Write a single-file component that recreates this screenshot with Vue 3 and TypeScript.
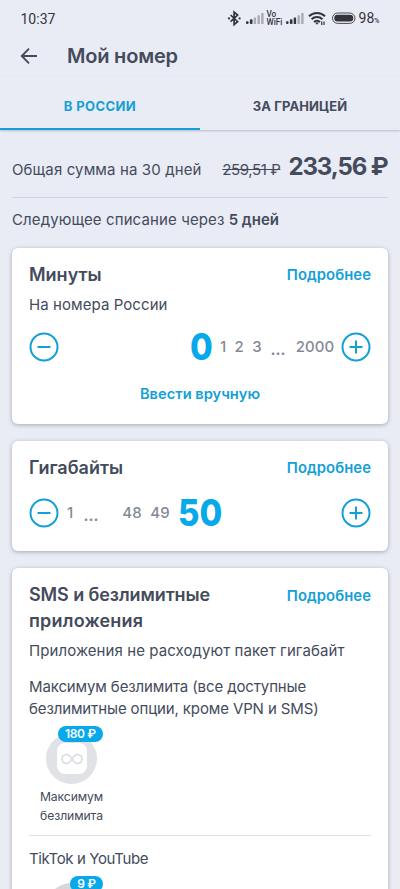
<script setup lang="ts">
interface Tab {
  label: string
  active: boolean
}

const tabs: Tab[] = [
  { label: 'В РОССИИ', active: true },
  { label: 'ЗА ГРАНИЦЕЙ', active: false },
]
</script>

<template>
  <div class="screen">
    <div class="status">
      <span class="clock">10:37</span>
      <svg class="status-icons" width="134" height="22" viewBox="226 8 134 22">
        <path d="M229.6 15l7 6.700-3.500 3V12l3.500 3-7 6.700" fill="none" stroke="#33353b" stroke-width="1.7" />
        <circle cx="228" cy="18.4" r="1.1" fill="#33353b" />
        <circle cx="238.6" cy="18.4" r="1.1" fill="#33353b" />
        <g fill="#33353b">
          <rect x="245" y="21.3" width="2.600" height="2.600" rx=".8" />
          <rect x="248.900" y="19.3" width="2.600" height="4.700" rx=".8" />
        </g>
        <g fill="#a9abb1">
          <rect x="252.700" y="17.500" width="2.400" height="6.500" rx=".6" />
          <rect x="256.500" y="15.300" width="2.400" height="8.700" rx=".6" />
          <rect x="260.200" y="13" width="2.400" height="11" rx=".6" />
        </g>
        <text x="265.500" y="16.900" class="tiny">Vo</text>
        <text x="265.500" y="24.900" class="tiny">WiFi</text>
        <g fill="#33353b">
          <rect x="285" y="21.3" width="2.600" height="2.600" rx=".8" />
          <rect x="288.900" y="19.3" width="2.600" height="4.700" rx=".8" />
          <rect x="292.700" y="17.500" width="2.400" height="6.500" rx=".6" />
        </g>
        <g fill="#a9abb1">
          <rect x="296.500" y="15.300" width="2.400" height="8.700" rx=".6" />
          <rect x="300.200" y="13" width="2.400" height="11" rx=".6" />
        </g>
        <g fill="none" stroke="#33353b" stroke-width="2">
          <path d="M308 16.200a11.500 11.500 0 0 1 16 0" />
          <path d="M310.600 19.200a7.700 7.700 0 0 1 10.800 0" />
          <path d="M313 22a4.200 4.200 0 0 1 6 0" />
        </g>
        <path d="M314 22.600h4L316 24.800z" fill="#33353b" />
        <path d="M320.700 21.500v3.500M323 21.500v3.500" stroke="#33353b" stroke-width="1.200" />
        <rect x="331.500" y="13" width="22.500" height="10.400" rx="5.200" fill="none" stroke="#4a4c52" stroke-width="1" />
        <rect x="333.300" y="14.800" width="18.900" height="6.800" rx="3" fill="#33353b" />
      </svg>
      <span class="battery">98<small>%</small></span>
    </div>

    <header class="header">
      <svg width="18" height="18" viewBox="0 0 18 18" fill="none" stroke="#444b5c" stroke-width="1.9">
        <path d="M17 9H2M9 1.700L1.800 9 9 16.300" />
      </svg>
      <h1 class="title">Мой номер</h1>
    </header>

    <nav class="tabs">
      <div v-for="tab in tabs" :key="tab.label" class="tab" :class="{ active: tab.active }">
        <span>{{ tab.label }}</span>
      </div>
    </nav>

    <main class="content">
      <div class="total">
        <span class="total-label">Общая сумма на 30 дней</span>
        <span class="old">259,51 ₽</span>
        <span class="price">233,56 ₽</span>
      </div>
      <p class="next"><span class="next-label">Следующее списание через</span> <b>5 дней</b></p>

      <section class="card minutes">
        <div class="card-head">
          <h2>Минуты</h2>
          <a class="more">Подробнее</a>
        </div>
        <p class="sub">На номера России</p>
        <div class="picker">
          <svg class="round" viewBox="0 0 30 30"><circle cx="15" cy="15" r="13.500" /><path d="M8.5 15h13" /></svg>
          <span class="big zero">0</span>
          <span class="num">1</span>
          <span class="num two">2</span>
          <span class="num three">3</span>
          <span class="dots">...</span>
          <span class="max">2000</span>
          <svg class="round" viewBox="0 0 30 30"><circle cx="15" cy="15" r="13.500" /><path d="M8.5 15h13M15 8.5v13" /></svg>
        </div>
        <a class="manual">Ввести вручную</a>
      </section>

      <section class="card gigs">
        <div class="card-head">
          <h2>Гигабайты</h2>
          <a class="more">Подробнее</a>
        </div>
        <div class="picker">
          <svg class="round" viewBox="0 0 30 30"><circle cx="15" cy="15" r="13.500" /><path d="M8.5 15h13" /></svg>
          <span class="num first">1</span>
          <span class="dots">...</span>
          <span class="pair far">48</span>
          <span class="pair">49</span>
          <span class="big fifty">50</span>
          <svg class="round last" viewBox="0 0 30 30"><circle cx="15" cy="15" r="13.500" /><path d="M8.5 15h13M15 8.5v13" /></svg>
        </div>
      </section>

      <section class="card apps">
        <div class="card-head">
          <h2><span class="tight">SMS и безлимитные</span><br><span class="loose">приложения</span></h2>
          <a class="more">Подробнее</a>
        </div>
        <p class="sub">Приложения не расходуют пакет гигабайт</p>
        <p class="group">Максимум безлимита (все доступные<br>безлимитные опции, кроме VPN и SMS)</p>
        <div class="option">
          <div class="disc">
            <div class="tile">
              <svg width="22" height="12" viewBox="0 0 22 12" fill="none" stroke="#dfe1e5" stroke-width="2">
                <path d="M11 6C9 3 7.800 1.400 5.600 1.400a4.600 4.600 0 0 0 0 9.200C7.800 10.600 9 9 11 6s3.200-4.600 5.400-4.600a4.600 4.600 0 0 1 0 9.200C14.200 10.600 13 9 11 6z" />
              </svg>
            </div>
            <span class="badge">180 ₽</span>
          </div>
          <div class="option-name">Максимум<br>безлимита</div>
        </div>
        <p class="tiktok">TikTok и YouTube</p>
        <div class="option">
          <div class="disc dark"><span class="badge">9 ₽</span></div>
        </div>
      </section>
    </main>
  </div>
</template>

<style>
body { background: #e9ecf5; overflow: hidden; }
</style>

<style scoped>
* { box-sizing: border-box; }
.screen {
  width: 400px;
  height: 889px;
  overflow: hidden;
  background: #e9ecf5;
  color: #444b5c;
  font-family: Inter, "Open Sans", sans-serif;
  font-size: 15px;
  white-space: nowrap;
}
h1, h2, p { margin: 0; }
.status { height: 36px; padding: 1px 20.500px 0 20.500px; display: flex; align-items: center; font-family: Roboto, sans-serif; color: #33353b; }
.clock { font-size: 14px; line-height: 20px; flex: 1; }
.status-icons { flex: none; margin-right: -2px; }
.tiny { font: 500 8.200px Roboto, sans-serif; fill: #33353b; }
.battery { font-size: 14px; line-height: 20px; padding-top: 1px; }
.battery small { font-size: 7px; font-weight: 500; }
.header { height: 40px; padding-left: 20px; display: flex; align-items: center; gap: 29px; }
.title { font-size: 20px; line-height: 26px; font-weight: 600; letter-spacing: -.2px; }
.tabs { height: 54px; display: flex; box-shadow: 0 1px 2px rgba(60, 70, 90, .28); }
.tab { flex: 1; display: flex; align-items: center; justify-content: center; padding-top: 7px; font-size: 13px; font-weight: 700; letter-spacing: .1px; border-bottom: 2px solid transparent; }
.tab.active { color: #149fd7; border-color: #149fd7; letter-spacing: .4px; }
.content { padding: 0 12px; }
.total { height: 67px; padding-top: 18px; display: flex; align-items: baseline; }
.total-label { flex: 1; letter-spacing: .13px; }
.old { text-decoration: line-through; margin-right: 8px; letter-spacing: -.4px; }
.price { font-size: 24px; line-height: 38px; font-weight: 700; letter-spacing: -1.1px; margin-right: .500px; }
.next { height: 51px; line-height: 20px; padding-top: 12px; border-top: 1px solid #cfd3dd; }
.next-label { letter-spacing: .11px; }
.next b { font-weight: 600; }
.card { background: #fff; border-radius: 6px; padding: 14px 17px 0; margin-bottom: 17px; box-shadow: 0 1px 4px rgba(50, 60, 80, .38); }
.minutes { height: 176px; }
.gigs { height: 110px; }
.apps { height: 360px; }
.card-head { display: flex; justify-content: space-between; align-items: flex-start; }
h2 { font-size: 18px; line-height: 26px; font-weight: 600; }
.tight { letter-spacing: -.1px; }
.loose { letter-spacing: .2px; }
.more { color: #149fd7; font-size: 14.800px; line-height: 26px; font-weight: 600; letter-spacing: .08px; }
.apps .more { line-height: 28px; }
.sub { line-height: 20px; margin-top: 7px; letter-spacing: .08px; }
.picker { height: 30px; display: flex; align-items: center; margin-top: 17px; color: #858995; font-size: 15px; font-weight: 500; line-height: 30px; text-align: center; }
.round { width: 30px; height: 30px; fill: none; stroke: #149fd7; stroke-width: 2; flex: none; }
.big { color: #08a9ea; font-size: 37px; font-weight: 800; text-align: left; transform: scaleX(.89); transform-origin: left; }
.zero { width: 24px; margin-left: auto; margin-right: 2px; }
.num { width: 14px; }
.two { margin-left: 2px; }
.three { margin-left: 4px; }
.first { margin-left: 4px; }
.dots { width: 16px; margin-left: 6px; padding-top: 5px; font-weight: 700; }
.max { width: 40px; margin: 0 6px 0 9px; }
.pair { width: 24px; margin-left: 4px; }
.far { margin-left: 21px; }
.fifty { margin-left: 6px; width: 50px; }
.last { margin-left: auto; }
.manual { display: block; margin-top: 22px; text-align: center; color: #149fd7; font-size: 14.700px; font-weight: 600; line-height: 20px; }
.group { margin-top: 15px; line-height: 22px; letter-spacing: -.12px; }
.option { width: 85px; display: flex; flex-direction: column; align-items: center; }
.disc { position: relative; width: 51px; height: 51px; margin-top: 13px; border-radius: 50%; background: #e0e2e6; display: flex; align-items: center; justify-content: center; }
.dark { background: #d5d7da; }
.tile { width: 30px; height: 31px; border-radius: 8px; background: #fff; display: flex; align-items: center; justify-content: center; }
.badge { position: absolute; top: -7px; right: -6px; height: 16px; padding: 0 7.500px; border-radius: 8px; background: #08a9ea; color: #fff; font-size: 12px; line-height: 16px; font-weight: 600; letter-spacing: -.4px; }
.option-name { margin-top: 3px; font-size: 12.200px; line-height: 19px; text-align: center; letter-spacing: -.1px; }
.tiktok { border-top: 1px solid #dddfe4; margin-top: 10px; padding-top: 12px; line-height: 22px; letter-spacing: -.38px; }
</style>
